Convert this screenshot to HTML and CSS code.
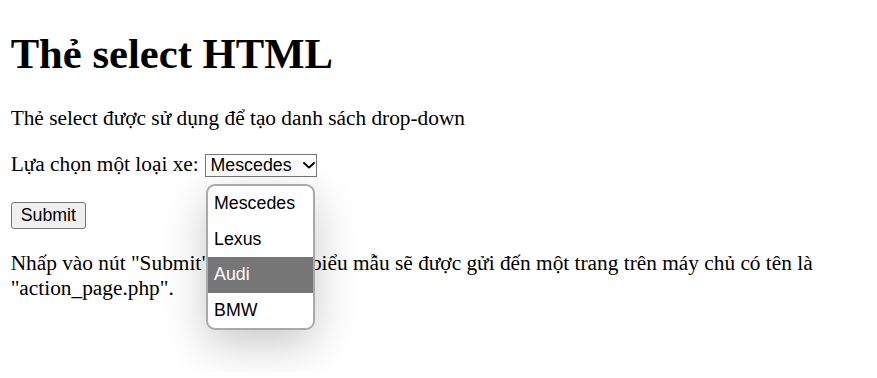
FILE: index.html
```
<!DOCTYPE html>
<html lang="vi">
<head>
<meta charset="utf-8">
<title>Thẻ select HTML</title>
<link rel="stylesheet" href="styles.css">
</head>
<body class="page">
<h1 class="title">Thẻ select HTML</h1>
<p class="text">Thẻ select được sử dụng để tạo danh sách drop-down</p>
<form class="form" action="/action_page.php">
  <label class="label" for="cars">Lựa chọn một loại xe:</label>
  <span class="select-wrap">
    <select class="select" id="cars" name="cars">
      <option value="mescedes">Mescedes</option>
      <option value="lexus">Lexus</option>
      <option value="audi">Audi</option>
      <option value="bmw">BMW</option>
    </select>
    <svg class="chevron" width="12" height="7" viewBox="0 0 12 7" aria-hidden="true">
      <polyline points="1,1 6,5.6 11,1" fill="none" stroke="#000" stroke-width="1.9" stroke-linecap="round" stroke-linejoin="round"/>
    </svg>
    <span class="popup">
      <span class="popup-item">Mescedes</span>
      <span class="popup-item">Lexus</span>
      <span class="popup-item popup-item-active">Audi</span>
      <span class="popup-item">BMW</span>
    </span>
  </span>
  <br><br>
  <input class="submit" type="submit" value="Submit">
</form>
<p class="text">Nhấp vào nút "Submit", và dữ liệu biểu mẫu sẽ được gửi đến một trang trên máy chủ có tên là "action_page.php".</p>
</body>
</html>
```
FILE: styles.css
```
html {
  margin: 0;
  padding: 0;
  background: #fff;
}
.page {
  margin: 0 10.67px;
  min-height: 372px;
  font-family: "Liberation Serif", "Times New Roman", serif;
  font-size: 21.33px;
  color: #000;
  background: #fff;
}
.title {
  font-size: 42.67px;
  font-weight: bold;
  margin: 28.59px 0;
}
.text {
  margin: 21.33px 0;
}
.form {
  margin: 0;
}
.select-wrap {
  position: relative;
  display: inline-block;
  margin-left: 1px;
}
.select {
  -webkit-appearance: none;
  appearance: none;
  box-sizing: border-box;
  width: 112px;
  height: 23px;
  padding: 0 0 0 4.5px;
  font-family: "Liberation Sans", Arial, sans-serif;
  font-size: 17.78px;
  color: #000;
  background-color: #fff;
  border: 1px solid #767676;
  border-radius: 0;
  margin: 0;
}
.chevron {
  position: absolute;
  left: 98px;
  top: 9.5px;
  pointer-events: none;
}
.popup {
  position: absolute;
  left: 1px;
  top: 32px;
  width: 105px;
  display: flex;
  flex-direction: column;
  background: #fff;
  border: 2px solid #a9a9a9;
  border-radius: 9px;
  overflow: hidden;
  box-shadow: 0 14px 44px rgba(0, 0, 0, 0.22);
  z-index: 2;
}
.popup-item {
  display: block;
  height: 35.5px;
  line-height: 35.5px;
  padding-left: 6px;
  font-family: "Liberation Sans", Arial, sans-serif;
  font-size: 17.78px;
  color: #000;
  white-space: nowrap;
}
.popup-item-active {
  background: #767676;
  color: #fff;
}
.submit {
  -webkit-appearance: none;
  appearance: none;
  box-sizing: border-box;
  height: 27px;
  padding: 0 9px;
  font-family: "Liberation Sans", Arial, sans-serif;
  font-size: 17.78px;
  color: #000;
  background: #efefef;
  border: 1px solid #767676;
  border-radius: 3px;
  margin: 0;
}
```
